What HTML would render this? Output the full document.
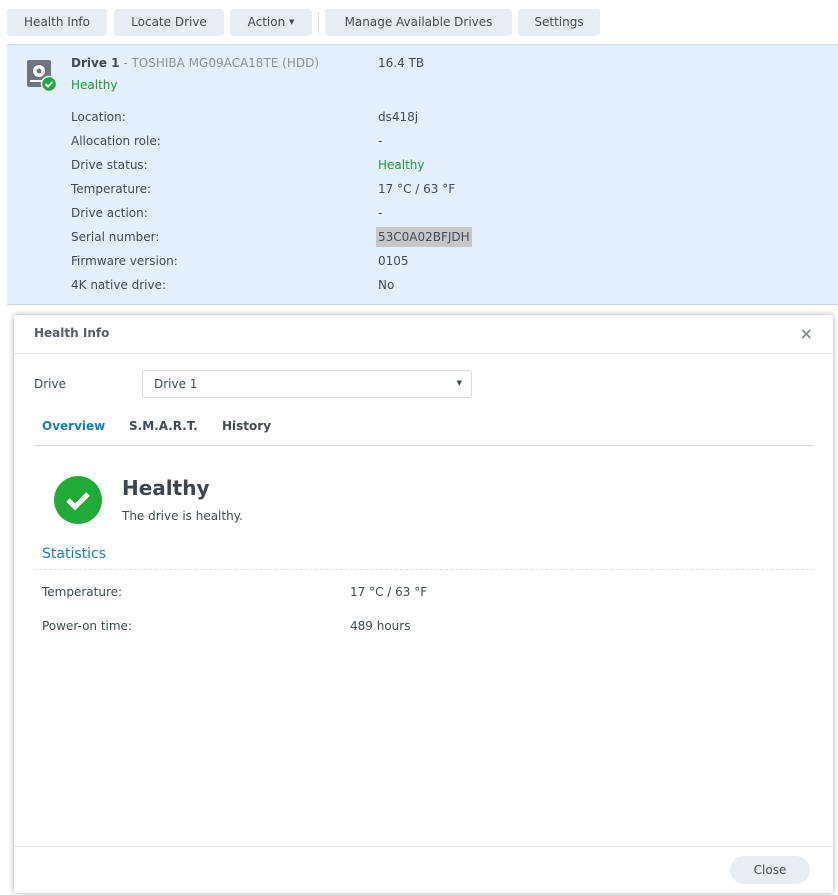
<!DOCTYPE html>
<html><head><style>
*{box-sizing:border-box;margin:0;padding:0}
body{width:838px;height:895px;overflow:hidden;background:#fff;font-family:"DejaVu Sans",sans-serif;font-size:12px;color:#414b55;position:relative}
.btn{position:absolute;top:9px;height:27px;background:#e8edf3;border-radius:3px;line-height:27px;text-align:center;color:#414b55;font-size:12px}
.panel{position:absolute;left:7px;top:44px;width:831px;height:261px;background:#e3effc;border-top:1px solid #d0dbe8;border-bottom:1px solid #c9d6e4}
.t{position:absolute;white-space:nowrap}
.dlg{position:absolute;left:14px;top:315px;width:819px;height:578px;background:#fff;box-shadow:0 0 6px rgba(0,0,0,.35);border-radius:2px}
</style></head><body>
<div class="btn" style="left:7px;width:100px">Health Info</div>
<div class="btn" style="left:114px;width:110px">Locate Drive</div>
<div class="btn" style="left:230px;width:82px">Action <span style="font-size:7px;vertical-align:2px">▼</span></div>
<div style="position:absolute;left:318px;top:12px;width:1px;height:21px;background:#d5dbe2"></div>
<div class="btn" style="left:325px;width:187px">Manage Available Drives</div>
<div class="btn" style="left:518px;width:82px">Settings</div>
<div class="panel"></div>
<svg style="position:absolute;left:26px;top:60px" width="32" height="32" viewBox="0 0 32 32"><rect x="1" y="0" width="24" height="27" rx="2" fill="#6e7780"/><circle cx="13" cy="11" r="6" fill="#fff"/><circle cx="13" cy="11" r="2.5" fill="#6e7780"/><rect x="4" y="20" width="12" height="2" fill="#fff"/><circle cx="23" cy="24" r="7.5" fill="#1fab36" stroke="#e3effc" stroke-width="1.5"/><path d="M19.5 24l2.5 2.5 4.5-4.5" stroke="#fff" stroke-width="2" fill="none"/></svg>
<div class="t" style="left:71px;top:56px"><b style="color:#414b55">Drive 1</b> <span style="color:#8a939c">- TOSHIBA MG09ACA18TE (HDD)</span></div>
<div class="t" style="left:378px;top:56px">16.4 TB</div>
<div class="t" style="left:71px;top:78px;color:#1fa02f">Healthy</div>
<div class="t" style="left:71px;top:110px">Location:</div><div class="t" style="left:378px;top:110px">ds418j</div>
<div class="t" style="left:71px;top:134px">Allocation role:</div><div class="t" style="left:378px;top:134px">-</div>
<div class="t" style="left:71px;top:158px">Drive status:</div><div class="t" style="left:378px;top:158px;color:#1fa02f">Healthy</div>
<div class="t" style="left:71px;top:182px">Temperature:</div><div class="t" style="left:378px;top:182px">17 °C / 63 °F</div>
<div class="t" style="left:71px;top:206px">Drive action:</div><div class="t" style="left:378px;top:206px">-</div>
<div class="t" style="left:71px;top:230px">Serial number:</div><div class="t" style="left:376px;top:227px;background:#c7c7c7;padding:3px 2px">53C0A02BFJDH</div>
<div class="t" style="left:71px;top:254px">Firmware version:</div><div class="t" style="left:378px;top:254px">0105</div>
<div class="t" style="left:71px;top:278px">4K native drive:</div><div class="t" style="left:378px;top:278px">No</div>
<div class="dlg">
 <div class="t" style="left:20px;top:11px;font-weight:bold;color:#56606a">Health Info</div>
 <div class="t" style="right:20px;top:9px;font-size:16px;font-weight:bold;color:#8a8f95">×</div>
 <div style="position:absolute;left:0;top:38px;width:100%;height:1px;background:#e3e6e9"></div>
 <div class="t" style="left:20px;top:62px">Drive</div>
 <div style="position:absolute;left:128px;top:55px;width:330px;height:28px;border:1px solid #d4dae0;border-radius:3px"><span class="t" style="left:11px;top:6px">Drive 1</span><span class="t" style="right:9px;top:8px;font-size:7px">▼</span></div>
 <div class="t" style="left:28px;top:104px;font-weight:bold;color:#1a7dc4">Overview</div>
 <div class="t" style="left:115px;top:104px;font-weight:bold">S.M.A.R.T.</div>
 <div class="t" style="left:208px;top:104px;font-weight:bold">History</div>
 <div style="position:absolute;left:20px;top:130px;width:780px;height:1px;background:#d6dde4"></div>
 <svg style="position:absolute;left:39px;top:160px" width="50" height="50"><circle cx="25" cy="25" r="24" fill="#1fab36"/><path d="M15 25l7 7 13-13" stroke="#fff" stroke-width="5" fill="none"/></svg>
 <div class="t" style="left:108px;top:161px;font-size:20px;font-weight:bold;color:#3d4650">Healthy</div>
 <div class="t" style="left:108px;top:194px">The drive is healthy.</div>
 <div class="t" style="left:28px;top:231px;font-size:14px;color:#1a7dc4">Statistics</div>
 <div style="position:absolute;left:20px;top:254px;width:780px;border-top:1px dashed #d6dde4"></div>
 <div class="t" style="left:28px;top:270px">Temperature:</div><div class="t" style="left:336px;top:270px">17 °C / 63 °F</div>
 <div class="t" style="left:28px;top:304px">Power-on time:</div><div class="t" style="left:336px;top:304px">489 hours</div>
 <div style="position:absolute;left:0;top:531px;width:100%;height:1px;background:#e3e6e9"></div>
 <div style="position:absolute;left:716px;top:541px;width:80px;height:28px;border-radius:14px;background:#e8edf3;text-align:center;line-height:28px">Close</div>
</div>
</body></html>
